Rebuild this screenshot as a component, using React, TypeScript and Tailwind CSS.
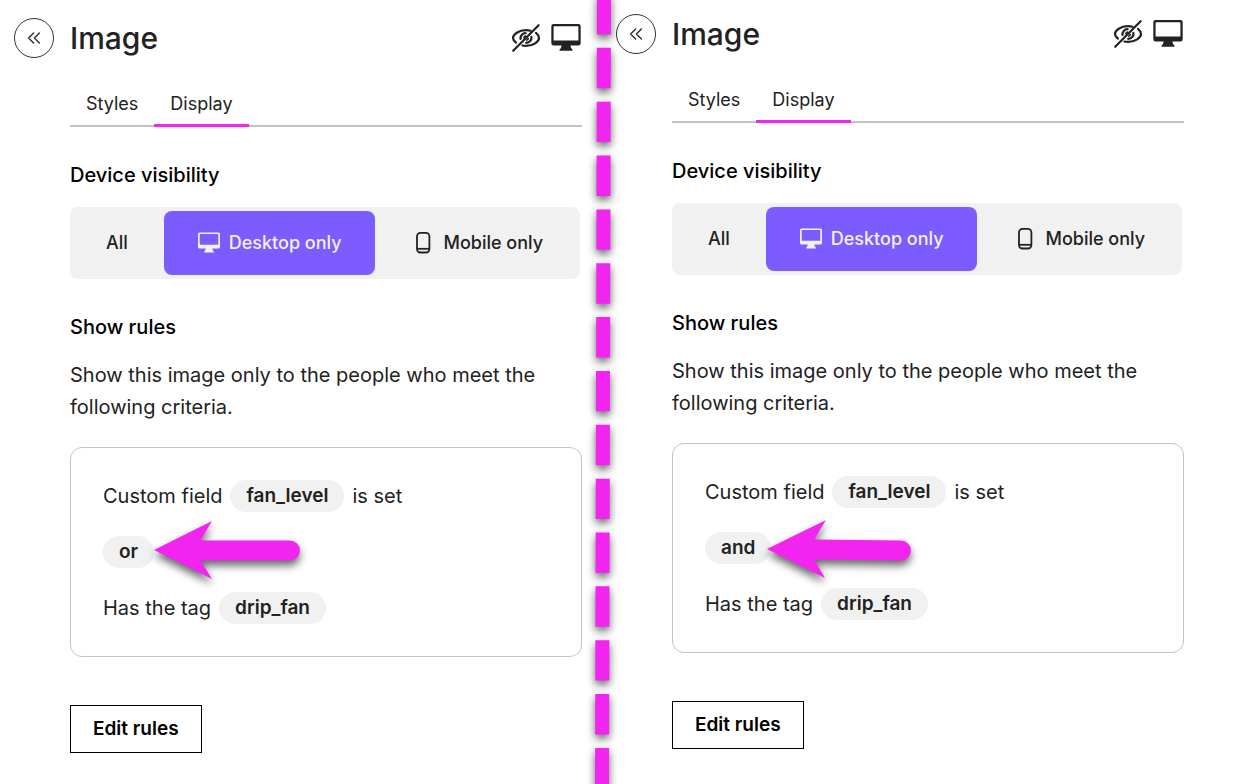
import React, { useState } from 'react';

function CollapseIcon() {
  return (
    <svg width="16" height="16" viewBox="0 0 16 16" fill="none" stroke="#333" strokeWidth="1.500" strokeLinecap="round" strokeLinejoin="round" aria-hidden="true">
      <path d="M7.600 3 2.600 8l5 5M13.400 3l-5 5 5 5" />
    </svg>
  );
}

function EyeOffIcon() {
  return (
    <svg width="32" height="32" viewBox="0 0 32 32" fill="none" stroke="#222" strokeWidth="2.200" strokeLinecap="round" aria-hidden="true">
      <path d="M3.200 28.800 28.600 3.200" />
      <path d="M6 20.600C4.200 19.200 3 17.600 3 16c0-3.600 5.800-7.800 12.800-7.800 1.800 0 3.400.2 4.800.6" />
      <path d="M26 10.800c1.800 1.500 3 3.400 3 5.200 0 3.600-5.800 7.900-13 7.900-1.300 0-2.500-.1-3.600-.4" />
      <path d="M10.600 17c-.5-3.200 1.800-5.700 5-5.800M21.400 14.800c.5 3.300-1.900 5.900-5.200 6" />
      <path strokeWidth="1.800" d="M13.900 15.600c.2-.8.900-1.300 1.700-1.400M18.200 16.600c-.2.700-.7 1.200-1.400 1.400" />
    </svg>
  );
}

function MonitorIcon({ size, color }: { size: number; color: string }) {
  return (
    <svg width={size} height={size} viewBox="0 0 24 24" fill={color} aria-hidden="true">
      <path
        fillRule="evenodd"
        d="M2.700 1.500h18.600A1.700 1.700 0 0 1 23 3.200v12.700a1.700 1.700 0 0 1-1.700 1.700h-6l.5 2 1 .9v1H7.200v-1l1-.9.5-2h-6A1.700 1.700 0 0 1 1 15.900V3.200A1.700 1.700 0 0 1 2.700 1.500Zm.4 1.600a.4.4 0 0 0-.4.4v10.300h18.600V3.500a.4.4 0 0 0-.4-.4Z"
      />
    </svg>
  );
}

function PhoneIcon() {
  return (
    <svg width="24" height="24" viewBox="0 0 24 24" fill="none" stroke="#222" strokeWidth="1.800" aria-hidden="true">
      <rect x="6" y="1.900" width="12.400" height="19.600" rx="3.400" />
      <path d="M6 17.800h12.400" />
    </svg>
  );
}

function Arrow({ className, path }: { className: string; path: string }) {
  return (
    <svg
      width="160"
      height="64"
      viewBox="0 0 160 64"
      className={`pointer-events-none absolute overflow-visible drop-shadow-[0_5px_4px_rgba(0,0,0,0.6)] ${className}`}
      aria-hidden="true"
    >
      <path d={path} fill="#f224f0" />
    </svg>
  );
}

function Pill({ children }: { children: React.ReactNode }) {
  return (
    <span className="flex h-8 items-center rounded-full bg-[#f1f1f1] px-4 text-[19px] font-semibold">{children}</span>
  );
}

const devices = ['All', 'Desktop only', 'Mobile only'];

function Panel({ joiner, className, arrow }: { joiner: string; className: string; arrow: React.ReactNode }) {
  const [tab, setTab] = useState('Display');
  const [device, setDevice] = useState('Desktop only');

  return (
    <section className={`flex items-start gap-4 pl-3.5 ${className}`}>
      <button type="button" aria-label="Collapse panel" className="flex size-10 shrink-0 items-center justify-center rounded-full border border-[#333]">
        <CollapseIcon />
      </button>
      <div className="min-w-0 flex-1">
        <header className="flex h-10 items-center justify-between">
          <h1 className="text-3xl font-medium">Image</h1>
          <div className="flex items-center gap-2">
            <EyeOffIcon />
            <MonitorIcon size={32} color="#222" />
          </div>
        </header>

        <div role="tablist" className="mt-6 flex border-b-2 border-[#c4c4c4]">
          {['Styles', 'Display'].map((name) => (
            <button
              key={name}
              type="button"
              role="tab"
              aria-selected={tab === name}
              onClick={() => setTab(name)}
              className={`-mb-0.5 h-[45px] border-b-[3px] px-4 pt-0.5 text-lg ${tab === name ? 'border-[#f224f0]' : 'border-transparent'}`}
            >
              {name}
            </button>
          ))}
        </div>

        <h2 className="mt-8 text-xl leading-8 font-medium text-black">Device visibility</h2>
        <div className="mt-4 mr-0.5 flex gap-1 rounded-lg bg-[#f1f1f1] p-1">
          {devices.map((name) => (
            <button
              key={name}
              type="button"
              aria-pressed={device === name}
              onClick={() => setDevice(name)}
              className={`flex h-16 items-center justify-center gap-2 rounded-lg px-8 text-lg font-medium whitespace-nowrap ${name === 'All' ? '' : 'grow'} ${device === name ? 'bg-[#7c5cff] text-[#f1f1f1]' : ''}`}
            >
              {name === 'Desktop only' && <MonitorIcon size={24} color={device === name ? '#f1f1f1' : '#222'} />}
              {name === 'Mobile only' && <PhoneIcon />}
              {name}
            </button>
          ))}
        </div>

        <h2 className="mt-8 text-xl leading-8 font-medium text-black">Show rules</h2>
        <p className="mt-4 text-xl leading-8">Show this image only to the people who meet the following criteria.</p>

        <div className="relative mt-6 flex flex-col gap-6 rounded-xl border border-[#c4c4c4] p-8 text-xl leading-8">
          <div className="flex items-center gap-2">
            Custom field <Pill>fan_level</Pill> is set
          </div>
          <div className="flex">
            <Pill>{joiner}</Pill>
          </div>
          <div className="flex items-center gap-2">
            Has the tag <Pill>drip_fan</Pill>
          </div>
          {arrow}
        </div>

        <button type="button" className="mt-12 h-12 border border-black px-[22px] text-[19px] font-semibold text-black">
          Edit rules
        </button>
      </div>
    </section>
  );
}

export default function App() {
  return (
    <main className="relative grid min-h-screen grid-cols-[minmax(0,602fr)_minmax(0,632fr)] overflow-hidden bg-white font-['Inter','Liberation_Sans',sans-serif] text-[#222]">
      <Panel
        joiner="or"
        className="pt-[18px] pr-5"
        arrow={
          <Arrow
            className="top-[73px] left-[83px]"
            path="M0 29 58 0 46.500 19.500H136a10 10 0 0 1 0 20H46.500L58 58Z"
          />
        }
      />
      <Panel
        joiner="and"
        className="pt-3.5 pr-[50px]"
        arrow={
          <Arrow
            className="top-[75px] left-[93px]"
            path="M1 30 60 1 48 20.500 135 21.500a10 10 0 0 1 0 20L48 40.500 59 59Z"
          />
        }
      />
      <svg
        className="pointer-events-none absolute inset-y-0 left-[595px] h-full w-4 overflow-visible drop-shadow-[0_4px_4px_rgba(0,0,0,0.6)]"
        aria-hidden="true"
      >
        <line x1="9" y1="-6" x2="7" y2="790" stroke="#f224f0" strokeWidth="14" strokeDasharray="40.400 13.450" />
      </svg>
    </main>
  );
}
